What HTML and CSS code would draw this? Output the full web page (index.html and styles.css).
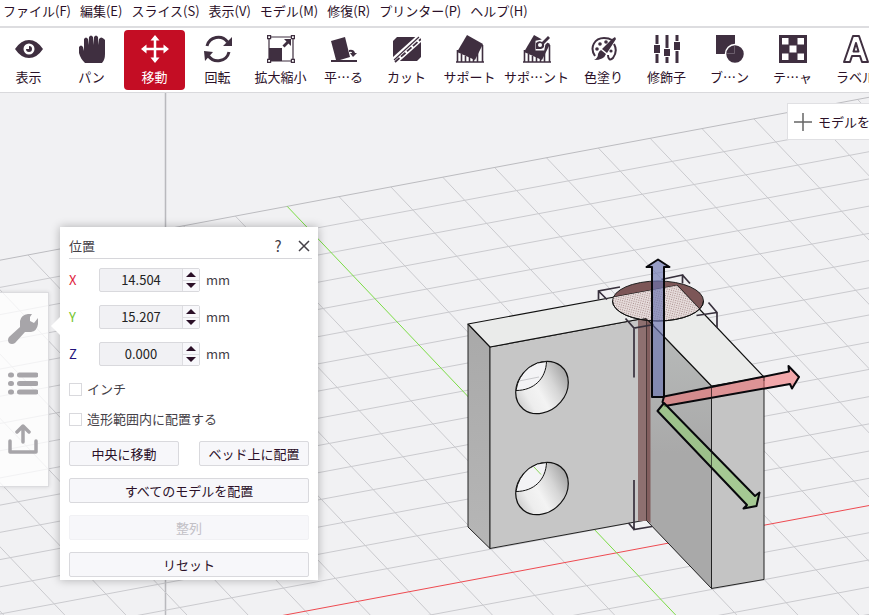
FILE: index.html
```html
<!DOCTYPE html>
<html lang="ja">
<head>
<meta charset="utf-8">
<title>モデルの配置</title>
<link rel="stylesheet" href="styles.css">
</head>
<body>
<nav class="menubar" aria-label="メニュー">
  <a href="#">ファイル(F)</a><a href="#">編集(E)</a><a href="#">スライス(S)</a><a href="#">表示(V)</a><a href="#">モデル(M)</a><a href="#">修復(R)</a><a href="#">プリンター(P)</a><a href="#">ヘルプ(H)</a>
</nav>
<header class="toolbar">
  <button class="tool" type="button">
    <svg viewBox="0 0 28 28"><path fill="currentColor" fill-rule="evenodd" d="M0 14Q6 5 14 5T28 14Q22 23 14 23T0 14ZM14 8.500a5.500 5.500 0 1 0 0 11 5.500 5.500 0 0 0 0-11ZM14 11a3 3 0 1 1-3 3l3 0Z"/></svg>
    <span>表示</span>
  </button>
  <button class="tool" type="button">
    <svg viewBox="0 0 28 28"><path fill="currentColor" d="M7 28C4 25 2 22 1 18L1 12Q3 9 5 12L6 16V4Q8 1 10 4L10.500 10 11 2Q13-1 15 2L15.500 10 16 2Q18-1 20 2L20.500 10 21 4Q23 1 26 4L27 5V19Q27 25 24 28Z"/></svg>
    <span>パン</span>
  </button>
  <button class="tool tool-active" type="button">
    <svg viewBox="0 0 28 28"><path stroke="currentColor" stroke-width="2.500" d="M14 3V25M3 14H25"/><path fill="currentColor" d="M14 0 18.500 5.500H9.500ZM14 28 9.500 22.500H18.500ZM0 14 5.500 9.500V18.500ZM28 14 22.500 18.500V9.500Z"/></svg>
    <span>移動</span>
  </button>
  <button class="tool" type="button">
    <svg viewBox="0 0 28 28"><path fill="none" stroke="currentColor" stroke-width="3" d="M3 11A11.500 11.500 0 0 1 23.500 7M25 17A11.500 11.500 0 0 1 4.500 21"/><path fill="currentColor" d="M28 2V11H19ZM0 16 9 17 1 26Z"/></svg>
    <span>回転</span>
  </button>
  <button class="tool" type="button">
    <svg viewBox="0 0 28 28"><path fill="none" stroke="currentColor" stroke-width="1.200" d="M2 2H26V26H2Z"/><path fill="currentColor" d="M2 13H15V26H2ZM24 4V11L21.500 8.500 17.500 12.500 15.500 10.500 19.500 6.500 17 4Z"/><path fill="#fff" stroke="currentColor" stroke-width="1.200" d="M.600.600H3.600V3.600H.600ZM24.400.600H27.400V3.600H24.400ZM.600 24.400H3.600V27.400H.600ZM24.400 24.400H27.400V27.400H24.400Z"/></svg>
    <span>拡大縮小</span>
  </button>
  <button class="tool" type="button">
    <svg viewBox="0 0 28 28"><path fill="currentColor" d="M1 6 15 2 20 22 10 25H6ZM1 25H27V27H1ZM23 22 20 18H22Q22 16 19 17L19 15Q24 14 25 18H27Z"/></svg>
    <span>平…る</span>
  </button>
  <button class="tool" type="button">
    <svg viewBox="0 0 28 28"><path fill="currentColor" d="M4 2H28V22L24 26H0V6Z"/><path stroke="#fff" stroke-width="7.500" d="M-1 28 29 1"/><path stroke="currentColor" stroke-width="1.200" d="M1 25 26 2"/><path stroke="currentColor" stroke-width="1.800" stroke-dasharray="6 2" d="M2 27 28 4"/></svg>
    <span>カット</span>
  </button>
  <button class="tool" type="button">
    <svg viewBox="0 0 28 28"><path fill="none" stroke="currentColor" stroke-width="1.600" d="M1.500 15V27M5.500 19V27M9.500 21V27M13.500 22V27M17.500 20V27M21.500 16V27M26.500 10V27M0 27H28"/><path fill="currentColor" d="M11 0 27 9 19 25 1 17Z"/></svg>
    <span>サポート</span>
  </button>
  <button class="tool" type="button">
    <svg viewBox="0 0 28 28"><path fill="none" stroke="currentColor" stroke-width="1.600" d="M1.500 15V27M5.500 19V27M9.500 21V27M13.500 22V27M17.500 20V27M21.500 16V27M26.500 10V27M0 27H28"/><path fill="currentColor" d="M11 0 27 9 19 25 1 17Z"/><path fill="#fff" stroke="#fff" stroke-width="3" d="M14 7 19 6 25 1 27 3 21 9 20 14 14 14Z"/><path fill="currentColor" d="M13 14V8Q16 5 19 7L25 1 27 3 21 9Q22 13 18 14Z"/><circle cx="17" cy="10" r="2" fill="#fff"/></svg>
    <span>サポ…ント</span>
  </button>
  <button class="tool" type="button">
    <svg viewBox="0 0 28 28"><path fill="none" stroke="currentColor" stroke-width="2" d="M5 21C-1 12 5 3 14 3Q19 3 22 5M24 9Q28 16 23 23C20 26 18 24 18 20"/><circle cx="7" cy="14" r="1.800" fill="currentColor"/><circle cx="10" cy="9" r="1.800" fill="currentColor"/><circle cx="16" cy="7" r="1.800" fill="currentColor"/><circle cx="21" cy="16" r="1.600" fill="currentColor"/><path fill="currentColor" d="M25 2 26 4 17 18 12 14 22 4ZM11 15 16 19Q14 25 4 25 8 23 8 19 9 16 11 15Z"/></svg>
    <span>色塗り</span>
  </button>
  <button class="tool" type="button">
    <svg viewBox="0 0 28 28"><path stroke="currentColor" stroke-width="3" d="M4 0V28M14 0V28M24 0V28"/><path stroke="#fff" stroke-width="8" d="M4 9V19M14 13V22M24 6V16"/><path fill="currentColor" d="M1 10H7V18H1ZM11 14H17V21H11ZM21 7H27V15H21Z"/></svg>
    <span>修飾子</span>
  </button>
  <button class="tool" type="button">
    <svg viewBox="0 0 28 28"><path fill="currentColor" d="M0 0H19V19H0Z"/><circle cx="19" cy="19" r="9.500" fill="currentColor" stroke="#fff" stroke-width="1.500"/><path fill="none" stroke="#8a7d89" stroke-width=".6" d="M18.500 10V18.500H10"/></svg>
    <span>ブ…ン</span>
  </button>
  <button class="tool" type="button">
    <svg viewBox="0 0 28 28"><path fill="currentColor" d="M0 0H28V28H0Z"/><path fill="#fff" d="M3 3H9.500V9.500H3ZM18.500 3H25V9.500H18.500ZM10.500 10.500H17.500V17.500H10.500ZM3 18.500H9.500V25H3ZM18.500 18.500H25V25H18.500Z"/></svg>
    <span>テ…ャ</span>
  </button>
  <button class="tool" type="button">
    <svg viewBox="0 0 28 28"><path fill="none" stroke="currentColor" stroke-width="2" stroke-linejoin="round" d="M2 27 11 1H17L26 27H20L18 21H10L8 27ZM14 8 11.500 16.500H16.500Z"/></svg>
    <span>ラベル</span>
  </button>
</header>
<main class="workspace">
  <svg class="scene" viewBox="0 93 869 522" preserveAspectRatio="xMinYMin slice" aria-hidden="true">
    <defs>
      <linearGradient id="hole" x1="0" y1=".8" x2="1" y2=".3"><stop offset="0" stop-color="#c4c4c4"/><stop offset=".25" stop-color="#ededed"/><stop offset=".45" stop-color="#f3f3f3"/><stop offset=".7" stop-color="#d6d6d6"/><stop offset="1" stop-color="#a0a0a0"/></linearGradient>
      <linearGradient id="inner" x1="0" y1="0" x2="0" y2="1"><stop offset="0" stop-color="#b9bcbb"/><stop offset=".5" stop-color="#a9a9a9"/><stop offset="1" stop-color="#a9a9a9"/></linearGradient>
      <linearGradient id="side" x1="0" y1="0" x2="0" y2="1"><stop offset="0" stop-color="#a9a9a9"/><stop offset="1" stop-color="#b6b6b6"/></linearGradient>
      <pattern id="speckle" width="5" height="5" patternUnits="userSpaceOnUse" patternTransform="rotate(-12)"><path fill="#e6dcdb" d="M0 0H5V5H0Z"/><path fill="#a98d8d" d="M0 0H1V1H0ZM2 1H3V2H2ZM4 2H5V3H4ZM1 3H2V4H1ZM3 4H4V5H3Z"/></pattern>
      <clipPath id="topface"><path d="M468 324 677 285.500 764 377 711.500 386 646 318 490 347Z"/></clipPath>
      <g id="bore">
        <ellipse rx="26.300" ry="25.700" transform="matrix(1 -.187 0 1 0 0)" fill="url(#hole)" stroke="#111" stroke-width="1.200"/>
        <path d="M-26 3Q-24-11-13-20-5-26 4.500-26C4-9-8 3-26 3Z" fill="#f3f3f5" stroke="#111"/>
      </g>
    </defs>
    <path stroke="#b9b9bd" stroke-width="1.500" d="M165.500 93V615"/>
    <g transform="matrix(51.850 -9.720 21.960 23.100 287.200 206.350)" fill="none">
      <path class="grid-line" d="M-11 0V21M-10 0V21M-9 0V21M-8 0V21M-7 0V21M-6 0V21M-5 0V21M-4 0V21M-3 0V21M-2 0V21M-1 0V21M1 0V21M2 0V21M3 0V21M4 0V21M5 0V21M6 0V21M7 0V21M8 0V21M9 0V21M10 0V21M11 0V21"/>
      <path class="grid-line" d="M-12 1H12M-12 2H12M-12 3H12M-12 4H12M-12 5H12M-12 6H12M-12 7H12M-12 8H12M-12 9H12M-12 10H12M-12 11H12M-12 12H12M-12 13H12M-12 14H12M-12 16H12M-12 17H12M-12 18H12M-12 19H12M-12 20H12"/>
      <path class="grid-line grid-edge" d="M-12 0H12"/>
      <path class="grid-line axis-x" d="M-12 15H12"/>
      <path class="grid-line axis-y" d="M0 0V21"/>
    </g>
    <g stroke="#222" stroke-width="1" stroke-linejoin="round">
      <path fill="url(#side)" d="M468 324 490 347V548.500L468 527Z"/>
      <path fill="#c6c6c6" d="M490 347 646 318V520L490 548.500Z"/>
      <path fill="url(#inner)" d="M646 318 711.500 386V588.500L647 521Z"/>
      <path fill="#c4c4c4" d="M711.500 386 764 377V579.500L711.500 588.500Z"/>
    </g>
    <path fill="#8e7070" d="M638 320H646V521H638Z"/>
    <path fill="#825e5e" d="M646 318 650.500 322V523L646 520Z"/>
    <path stroke="#493838" d="M646.500 318V521"/>
    <ellipse cx="658" cy="301" rx="45.500" ry="20" fill="#7c5657" stroke="#222"/>
    <path fill="#eaebea" stroke="#111" stroke-width="1.200" stroke-linejoin="round" d="M468 324 677 285.500 764 377 711.500 386 646 318 490 347Z"/>
    <g clip-path="url(#topface)"><ellipse cx="658" cy="301" rx="45.500" ry="20" fill="url(#speckle)" stroke="#222"/></g>
    <path fill="none" stroke="#111" d="M612.500 301A45.500 20 0 0 0 703.500 301"/>
    <use href="#bore" x="542" y="387.500"/>
    <use href="#bore" x="542" y="488.500"/>
    <path stroke="#c9c9cc" d="M519 381 539 377"/>
    <path stroke="#8bd65c" d="M534 467 541 474.500"/>
    <g class="bounds">
      <path d="M598.500 299.500V291L620 287M598.500 291 607 299.500"/>
      <path d="M661.500 279.500 682.500 275V283.500M682.500 275 690 283.500"/>
      <path d="M708.500 302.500 717 312.500V328M696.500 315.500 717 312.500"/>
      <path d="M625.500 318.500 634 328 654 324.500M634 328V377.500"/>
      <path d="M634 480V529.500L652 526.500M628.500 523 634 529.500"/>
    </g>
    <g class="gizmo">
      <path fill="#6b73b0" fill-opacity=".66" d="M652 397V267H646.500L658 259.500 669.500 267H664V397Z"/>
      <path fill="#f26b70" fill-opacity=".55" d="M664 396.500 789 371.500 788.500 366 799 377 792 388.500 790 384 665 406 662.500 402Z"/>
      <path fill="#97cb7c" fill-opacity=".68" d="M664 403 755 496 759.500 492.500 756.500 506 743.500 508.500 747 505 657.500 411Z"/>
    </g>
    <path stroke="#222" stroke-opacity=".6" d="M711.500 386V402M711.500 452V466M764 377V381"/>
  </svg>
  <div class="overlay">
    <nav class="rail" aria-label="サイドツール">
      <button type="button" aria-label="設定"><svg viewBox="0 0 30 30"><path fill="currentColor" d="M30 4V10Q29 17 23 18L17 18 7 29Q4 31 1 29-1 26 1 23L12 13V7Q13 1 20 0H24L22 3V7L26 9Z"/></svg></button>
      <button type="button" aria-label="リスト"><svg viewBox="0 0 30 30"><path fill="none" stroke="currentColor" stroke-width="5" stroke-linecap="round" d="M2.500 6H3.500M11.500 6H28M2.500 14.500H3.500M11.500 14.500H28M2.500 23H3.500M11.500 23H28"/></svg></button>
      <button type="button" aria-label="書き出し"><svg viewBox="0 0 30 30"><path fill="none" stroke="currentColor" stroke-width="3.500" stroke-linecap="round" stroke-linejoin="round" d="M15 18V3M9 8 15 2 21 8M2 17V28H28V17"/></svg></button>
    </nav>
    <section class="panel" aria-labelledby="panel-title">
      <header class="panel-head">
        <h1 id="panel-title">位置</h1>
        <button type="button" aria-label="ヘルプ">?</button>
        <button type="button" aria-label="閉じる"><svg viewBox="0 0 12 12"><path stroke="currentColor" stroke-width="1.500" d="M1 1 11 11M11 1 1 11"/></svg></button>
      </header>
      <div class="axis">
        <label class="axis-red" for="pos-x">X</label>
        <span class="spin"><input id="pos-x" type="text" value="14.504"><span class="steps"><button type="button" aria-label="X を増やす"><i class="up"></i></button><button type="button" aria-label="X を減らす"><i class="down"></i></button></span></span>
        <span>mm</span>
      </div>
      <div class="axis">
        <label class="axis-green" for="pos-y">Y</label>
        <span class="spin"><input id="pos-y" type="text" value="15.207"><span class="steps"><button type="button" aria-label="Y を増やす"><i class="up"></i></button><button type="button" aria-label="Y を減らす"><i class="down"></i></button></span></span>
        <span>mm</span>
      </div>
      <div class="axis">
        <label class="axis-blue" for="pos-z">Z</label>
        <span class="spin"><input id="pos-z" type="text" value="0.000"><span class="steps"><button type="button" aria-label="Z を増やす"><i class="up"></i></button><button type="button" aria-label="Z を減らす"><i class="down"></i></button></span></span>
        <span>mm</span>
      </div>
      <div class="checks">
        <label class="check"><input type="checkbox">インチ</label>
        <label class="check"><input type="checkbox">造形範囲内に配置する</label>
      </div>
      <div class="actions">
        <button type="button">中央に移動</button>
        <button type="button">ベッド上に配置</button>
        <button class="wide" type="button">すべてのモデルを配置</button>
        <button class="wide" type="button" disabled>整列</button>
        <button class="wide" type="button">リセット</button>
      </div>
    </section>
    <button class="add" type="button"><svg viewBox="0 0 18 18"><path stroke="currentColor" stroke-width="1.500" d="M9 0V18M0 9H18"/></svg>モデルを</button>
  </div>
</main>
</body>
</html>
```
FILE: styles.css
```css
* { box-sizing: border-box; }

body {
  margin: 0;
  min-height: 100vh;
  display: flex;
  flex-direction: column;
  overflow: hidden;
  background: #f1f1f3;
  color: #2b1028;
  font: 13px/20px "Noto Sans CJK JP", "Noto Sans", sans-serif;
}

button {
  margin: 0;
  padding: 0;
  border: 0;
  background: none;
  color: inherit;
  font: inherit;
  white-space: nowrap;
}

.menubar {
  display: flex;
  gap: 9px;
  height: 28px;
  padding: 1px 3px 0;
  border-bottom: 2px solid #dddde0;
  background: #fff;
  white-space: nowrap;
}

.menubar a { color: #2b1028; text-decoration: none; }

.toolbar {
  display: flex;
  gap: 2px;
  height: 65px;
  margin-left: -2px;
  padding: 2px 0;
  border-bottom: 1px solid #d9d9dc;
  background: #fff;
  overflow: hidden;
}

.tool {
  flex: none;
  display: flex;
  flex-direction: column;
  align-items: center;
  gap: 4px;
  min-width: 61px;
  height: 60px;
  padding: 5px 2px 0;
  border-radius: 4px;
}

.tool svg { width: 28px; height: 28px; color: #3f2f40; }
.tool-active { background: #c40d24; color: #fff; }
.tool-active svg { color: #fff; }

.workspace { flex: 1; display: grid; min-height: 0; overflow: hidden; }
.scene, .overlay { grid-area: 1 / 1; min-width: 0; }
.scene { width: 100%; height: 100%; }

.grid-line { stroke: #cacace; stroke-width: 1px; vector-effect: non-scaling-stroke; }
.grid-edge { stroke: #bcbcc0; }
.axis-x { stroke: #ee4a50; }
.axis-y { stroke: #7bdc45; }
.bounds { fill: none; stroke: #37303c; stroke-width: 1.7px; }
.gizmo { stroke: #08080c; stroke-width: 2px; stroke-linejoin: round; }

.overlay { position: relative; display: flex; align-items: flex-start; }

.rail {
  display: flex;
  flex-direction: column;
  align-items: center;
  gap: 25px;
  width: 49px;
  margin-top: 199px;
  padding: 21px 2px 32px 0;
  border: 1px solid #dcdcdf;
  border-left: 0;
  background: rgba(255, 255, 255, 0.75);
  box-shadow: 0 0 4px rgba(0, 0, 0, 0.12);
  color: #a7a5a9;
}

.rail svg { display: block; width: 30px; height: 30px; }

.panel {
  position: relative;
  width: 258px;
  margin: 134px 0 0 11px;
  padding: 6px 6px 3px 9px;
  background: #fff;
  box-shadow: 0 0 9px rgba(0, 0, 0, 0.28);
  color: #444047;
}

.panel::before {
  content: "";
  position: absolute;
  left: -9px;
  top: 90px;
  border: solid transparent;
  border-width: 9px 9px 9px 0;
  border-right-color: #fff;
}

.panel-head {
  display: flex;
  align-items: center;
  height: 26px;
  margin-bottom: 9px;
  border-bottom: 1px solid #d6d6da;
}

.panel-head h1 { flex: 1; margin: 0; font-size: 13px; font-weight: 400; line-height: 24px; }
.panel-head button { width: 26px; height: 22px; font-size: 15px; line-height: 20px; }
.panel-head button:last-child { margin-right: -5px; }
.panel-head svg { width: 12px; height: 12px; }

.axis { display: flex; align-items: center; height: 24px; margin-bottom: 13px; }
.axis > label { width: 30px; }
.axis-red { color: #e01c3c; }
.axis-green { color: #75c52f; }
.axis-blue { color: #22127a; }

.spin {
  display: flex;
  width: 101px;
  height: 24px;
  margin-right: 6px;
  border: 1px solid #d9d9dd;
  border-radius: 2px;
  background: #f1f1f4;
}

.spin input {
  flex: 1;
  min-width: 0;
  padding: 0;
  border: 0;
  background: none;
  color: #222;
  font: inherit;
  text-align: center;
}

.steps {
  display: flex;
  flex-direction: column;
  width: 17px;
  border-left: 1px solid #dddde1;
  background: #f8f8fb;
}

.steps button { flex: 1; display: grid; place-items: center; }
.steps button + button { border-top: 1px solid #dddde1; }
.up, .down { border: 5px solid transparent; }
.up { border-top: 0; border-bottom-color: #2b1028; }
.down { border-bottom: 0; border-top-color: #2b1028; }

.checks { display: grid; gap: 10px; margin-bottom: 12px; }
.check { display: flex; align-items: center; gap: 5px; height: 20px; }

.check input {
  appearance: none;
  width: 13px;
  height: 13px;
  margin: 0;
  border: 1px solid #d9d9dd;
  background: #fff;
}

.actions {
  display: grid;
  grid-template-columns: 1fr 1fr;
  gap: 12px 20px;
  margin-right: 3px;
}

.actions button {
  height: 25px;
  border: 1px solid #d9d9dd;
  border-radius: 2px;
  background: #f7f7fa;
  color: #2b1028;
  line-height: 23px;
}

.actions .wide { grid-column: 1 / -1; }
.actions button:disabled { border-color: #f1f1f4; color: #c2c0c6; }

.add {
  display: flex;
  align-items: center;
  gap: 6px;
  height: 37px;
  margin: 10px -1px 0 auto;
  padding-left: 6px;
  border: 1px solid #e0e0e3;
  border-right: 0;
  background: #fff;
}

.add svg { width: 18px; height: 18px; color: #666; }
```
